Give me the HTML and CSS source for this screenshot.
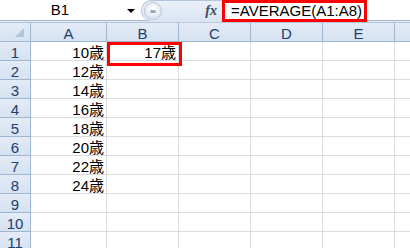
FILE: index.html
```html
<!DOCTYPE html>
<html lang="ja">
<head>
<meta charset="utf-8">
<link rel="stylesheet" href="styles.css">
</head>
<body>
<div class="app">
  <div class="fbar">
    <div class="namebox"><span class="name">B1</span><span class="arrow"></span></div>
    <div class="fmid"><span class="grip"><span class="dot"></span></span><span class="fx">fx</span></div>
    <div class="finput"><span class="ftext">=AVERAGE(A1:A8)</span></div>
    <div class="hl hl-formula"></div>
  </div>
  <div class="band"></div>
  <div class="sheet">
    <div class="hd corner"><span class="tri"></span></div>
    <div class="hd col">A</div><div class="hd col">B</div><div class="hd col">C</div><div class="hd col">D</div><div class="hd col">E</div><div class="hd col"></div>

    <div class="hd row">1</div><div class="c">10歳</div><div class="c">17歳</div><div class="c"></div><div class="c"></div><div class="c"></div><div class="c"></div>
    <div class="hd row">2</div><div class="c">12歳</div><div class="c"></div><div class="c"></div><div class="c"></div><div class="c"></div><div class="c"></div>
    <div class="hd row">3</div><div class="c">14歳</div><div class="c"></div><div class="c"></div><div class="c"></div><div class="c"></div><div class="c"></div>
    <div class="hd row">4</div><div class="c">16歳</div><div class="c"></div><div class="c"></div><div class="c"></div><div class="c"></div><div class="c"></div>
    <div class="hd row">5</div><div class="c">18歳</div><div class="c"></div><div class="c"></div><div class="c"></div><div class="c"></div><div class="c"></div>
    <div class="hd row">6</div><div class="c">20歳</div><div class="c"></div><div class="c"></div><div class="c"></div><div class="c"></div><div class="c"></div>
    <div class="hd row">7</div><div class="c">22歳</div><div class="c"></div><div class="c"></div><div class="c"></div><div class="c"></div><div class="c"></div>
    <div class="hd row">8</div><div class="c">24歳</div><div class="c"></div><div class="c"></div><div class="c"></div><div class="c"></div><div class="c"></div>
    <div class="hd row">9</div><div class="c"></div><div class="c"></div><div class="c"></div><div class="c"></div><div class="c"></div><div class="c"></div>
    <div class="hd row">10</div><div class="c"></div><div class="c"></div><div class="c"></div><div class="c"></div><div class="c"></div><div class="c"></div>
    <div class="hd row">11</div><div class="c"></div><div class="c"></div><div class="c"></div><div class="c"></div><div class="c"></div><div class="c"></div>
  </div>
  <div class="hl hl-cell"></div>
</div>
</body>
</html>
```
FILE: styles.css
```css
* { box-sizing: border-box; }
html, body { margin: 0; padding: 0; background: #fff; }
body {
  width: 410px; height: 248px; overflow: hidden;
  font-family: "Liberation Sans", "Noto Sans CJK JP", sans-serif;
  font-size: 15px;
}
.app { position: relative; width: 410px; height: 248px; overflow: hidden; }

.fbar {
  position: relative;
  display: flex;
  height: 21px;
  border-bottom: 1px solid #a7bad3;
  background: #fff;
}
.namebox {
  width: 141px;
  display: flex; align-items: center;
}
.name { width: 120px; text-align: center; color: #000; line-height: 20px; }
.arrow {
  width: 0; height: 0;
  border-left: 4px solid transparent; border-right: 4px solid transparent;
  border-top: 4px solid #000;
  margin-left: auto;
  margin-right: 6px; margin-top: 2px;
}
.fmid {
  width: 81px;
  display: flex; align-items: center;
  background: linear-gradient(#e9eff8, #dbe5f2);
  border-radius: 10px 0 0 10px;
  border: 1px solid #b4c6dc;
  border-right: none;
  border-bottom: none;
  height: 21px;
}
.grip {
  width: 18px; height: 18px; border-radius: 50%;
  margin-left: 2px;
  background: radial-gradient(circle at 50% 40%, #ffffff 0, #eef2f8 40%, #c9d5e4 100%);
  border: 1px solid #b9c8da;
  display: flex; align-items: center; justify-content: center;
}
.dot { width: 6px; height: 3px; border-radius: 2px; background: #9aaabd; }
.fx {
  margin-left: auto; margin-right: 5px;
  font-family: "Liberation Serif", serif;
  font-style: italic; font-weight: bold;
  font-size: 14px; color: #3d4d63;
}
.finput { flex: 1; line-height: 20px; padding-left: 9px; color: #000; padding-top: 1px; }

.band { height: 2px; background: #dde7f3; border-bottom: 1px solid #b7c7db; }

.sheet {
  display: grid;
  grid-template-columns: 31px 76px 72px 72px 72px 72px 40px;
  grid-auto-rows: 19px;
}
.hd {
  background: linear-gradient(#e3ebf6, #d6e2f1);
  border-right: 1px solid #9eb6ce;
  border-bottom: 1px solid #9eb6ce;
  color: #22406b;
  display: flex; align-items: center; justify-content: center;
  line-height: 16px;
  padding-top: 3px;
}
.corner { position: relative; }
.tri {
  position: absolute; right: 6px; bottom: 4px;
  width: 0; height: 0;
  border-left: 9px solid transparent;
  border-bottom: 9px solid #b5c5d8;
}
.c {
  border-right: 1px solid #dadcdd;
  border-bottom: 1px solid #dadcdd;
  text-align: right;
  padding-right: 2px;
  padding-top: 3px;
  line-height: 16px;
  color: #000;
  white-space: nowrap;
}

.hl { position: absolute; border: 3px solid #f00; pointer-events: none; }
.hl-formula { left: 222px; top: 0; width: 145px; height: 22px; }
.hl-cell { left: 107px; top: 42px; width: 75px; height: 24px; }
```
